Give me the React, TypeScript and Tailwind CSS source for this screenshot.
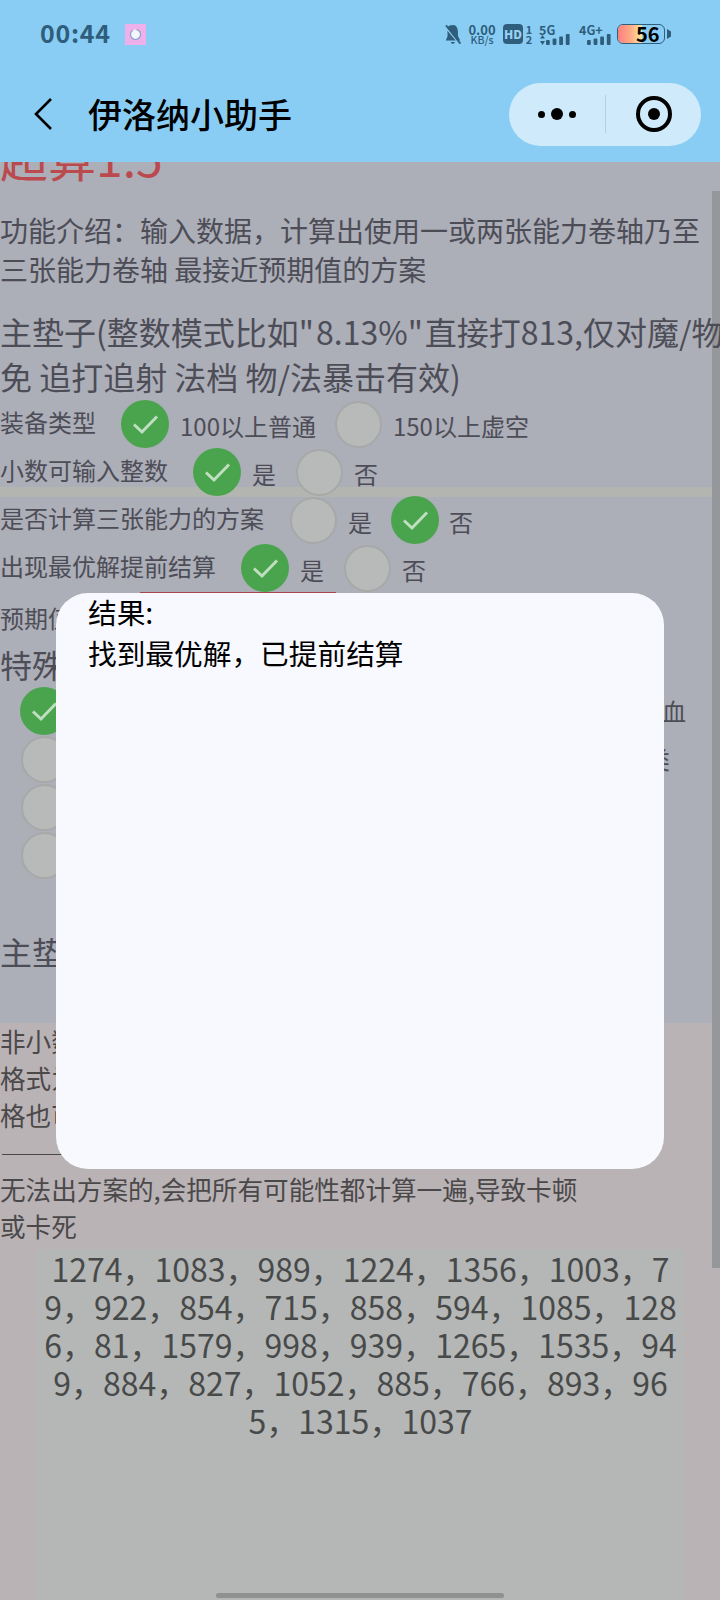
import React from "react";

const Check = () => (
  <span className="flex h-[48px] w-[48px] shrink-0 items-center justify-center rounded-full bg-[#4aa44e]">
    <svg width="27" height="22" viewBox="0 0 27 22" fill="none">
      <path d="M2 11.5 L10 19 L25 3.5" stroke="#bfdfc0" strokeWidth="3" strokeLinejoin="miter" />
    </svg>
  </span>
);

const Empty = () => (
  <span className="flex h-[48px] w-[48px] shrink-0 items-center justify-center">
    <span className="block h-[47px] w-[47px] rounded-full border-2 border-[#a7a8a8] bg-[#b8b9b9]" />
  </span>
);

const Bars = () => (
  <svg width="24" height="11" viewBox="0 0 24 11" fill="#2f5d7c">
    <rect x="0" y="6" width="3.8" height="5" rx="1" />
    <rect x="6.6" y="4.5" width="3.8" height="6.5" rx="1" />
    <rect x="13.2" y="2.5" width="3.8" height="8.5" rx="1" />
    <rect x="19.8" y="0" width="3.8" height="11" rx="1" />
  </svg>
);

function StatusBar() {
  return (
    <div className="flex h-[68px] items-center pl-[40px] text-[#2f5d7c]">
      <span className="mb-[3px] w-[85px] text-[25px] font-bold leading-none tracking-[0.7px]">00:44</span>
      <span className="flex h-[21px] w-[21px] items-center justify-center bg-[#eeb0ea]">
        <svg width="13" height="13" viewBox="0 0 13 13" fill="none">
          <circle cx="6.5" cy="6.5" r="5" fill="#f3f6fb" stroke="#8aa2c8" strokeWidth="1.2" strokeDasharray="20 4" />
        </svg>
      </span>
      <div className="ml-[298px] flex items-center">
        <svg width="18" height="21" viewBox="0 0 20 21" fill="#2f5d7c" preserveAspectRatio="none">
          <path d="M10 1 C14 1 15.5 4.5 15.5 8 L15.5 12 L18 16.5 L15 16.5 L4 3 C5 1.8 7.5 1 10 1 Z" />
          <path d="M3.8 6.8 L13 16.5 L2 16.5 L4 12 Z" />
          <path d="M7.5 18 L12 18 C11.6 20.4 8 20.4 7.5 18 Z" />
          <path d="M1.5 2 L3 .8 L19 19 L17.5 20.2 Z" />
        </svg>
        <div className="ml-[7px] flex w-[26px] flex-col items-center leading-none">
          <span className="text-[13px] font-semibold leading-[11px]">0.00</span>
          <span className="text-[10.5px] font-medium leading-[10px]">KB/s</span>
        </div>
        <span className="ml-[8px] flex h-[20px] w-[20px] items-center justify-center rounded-[4px] bg-[#2f5d7c] text-[12px] font-black leading-none text-[#9ad2f2]">HD</span>
        <div className="ml-[2px] flex w-[8px] flex-col items-center text-[11px] font-semibold leading-[10px]">
          <span>1</span>
          <span>2</span>
        </div>
        <div className="relative ml-[6px] h-[21px] w-[31px]">
          <span className="absolute left-0 top-0 text-[12.5px] font-bold leading-[11px]">5G</span>
          <svg className="absolute bottom-0 left-[1px]" width="5" height="10" viewBox="0 0 5 10" fill="#2f5d7c">
            <path d="M2.5 0 L5 3.5 L0 3.5 Z" />
            <path d="M0 6 L5 6 L2.5 10 Z" />
          </svg>
          <span className="absolute bottom-0 right-0 flex"><Bars /></span>
        </div>
        <div className="relative ml-[9px] h-[21px] w-[32px]">
          <span className="absolute left-0 top-0 whitespace-nowrap text-[12.5px] font-bold leading-[11px]">4G+</span>
          <span className="absolute bottom-0 right-0 flex"><Bars /></span>
        </div>
        <div className="relative ml-[6px] flex h-[20px] w-[48px] items-center rounded-[6px] border border-[#2f5d7c]">
          <span className="block h-full w-[24px] rounded-l-[5px] bg-gradient-to-r from-[#fb7f7f] via-[#fda885] to-[#f8e89a]" />
          <span className="absolute left-[18px] text-[20px] font-bold leading-none text-black">56</span>
        </div>
        <svg className="ml-[2px]" width="5" height="10" viewBox="0 0 5 10" fill="#2f5d7c">
          <path d="M0 0 L4 2.5 L4 7.5 L0 10 Z" />
        </svg>
      </div>
    </div>
  );
}

function NavBar() {
  return (
    <div className="flex h-[94px] items-center">
      <svg className="mb-[2px] ml-[33px]" width="20" height="34" viewBox="0 0 20 34" fill="none">
        <path d="M18 2 L3 17 L18 32" stroke="#000" strokeWidth="2.6" />
      </svg>
      <span className="mb-[3px] ml-[35px] text-[34px] font-medium leading-none text-black">伊洛纳小助手</span>
      <div className="mb-[2px] ml-[217px] flex h-[63px] w-[192px] items-center rounded-full bg-[#cfeafb]">
        <div className="flex w-[96px] items-center justify-center gap-[6px]">
          <span className="h-[7px] w-[7px] rounded-full bg-black" />
          <span className="h-[12px] w-[12px] rounded-full bg-black" />
          <span className="h-[7px] w-[7px] rounded-full bg-black" />
        </div>
        <span className="h-[38px] w-px bg-[#b4cfe0]" />
        <div className="flex flex-1 items-center justify-center">
          <span className="flex h-[36px] w-[36px] items-center justify-center rounded-full border-[4px] border-black">
            <span className="h-[12px] w-[12px] rounded-full bg-black" />
          </span>
        </div>
      </div>
    </div>
  );
}

function Choice({ label, on, a, b, a2 = 19, b1 = 11 }: { label: string; on: 0 | 1; a: string; b: string; a2?: number; b1?: number }) {
  return (
    <div className="relative z-10 flex h-[48px] items-center text-[24px] leading-none">
      <span className="mb-[4px] mr-[25px] whitespace-nowrap">{label}</span>
      {on === 0 ? <Check /> : <Empty />}
      <span className="ml-[11px] mt-[4px] whitespace-nowrap" style={{ marginRight: a2 }}>{a}</span>
      {on === 1 ? <Check /> : <Empty />}
      <span className="mt-[4px] whitespace-nowrap" style={{ marginLeft: b1 }}>{b}</span>
    </div>
  );
}

export default function App() {
  return (
    <div className="relative flex h-[1600px] w-[720px] flex-col overflow-hidden bg-[#89cdf4] font-['Noto_Sans_CJK_SC','Noto_Sans',sans-serif]">
      <StatusBar />
      <NavBar />
      <main className="flex-1 overflow-hidden bg-[#b9b3b5]">
        <section className="relative flow-root h-[861px] bg-[#acaeb8] text-[#4c4d56]">
          <div className="mt-[-36px] h-[60px] whitespace-nowrap text-[48px] leading-[60px] text-[#ba4a4d]">超算1.5</div>
          <p className="mt-[25px] w-[704px] text-[28px] leading-[39px]">
            功能介绍：输入数据，计算出使用一或两张能力卷轴乃至三张能力卷轴 最接近预期值的方案
          </p>
          <p className="relative z-10 mt-[20px] w-[726px] text-[32px] leading-[45px]">
            {"主垫子(整数模式比如\"\u200A8.13%\"\u200A直接打813,仅对魔/物免 追打追射 法档 物/法暴击有效)"}
          </p>
          <div className="relative mt-[1px]">
            <div className="absolute left-0 right-0 top-[87px] h-[10px] bg-[#b3b5b0]" />
            <Choice label="装备类型" on={0} a="100以上普通" b="150以上虚空" b1={10} />
            <Choice label="小数可输入整数" on={0} a="是" b="否" />
            <Choice label="是否计算三张能力的方案" on={1} a="是" b="否" b1={10} />
            <Choice label="出现最优解提前结算" on={0} a="是" b="否" />
          </div>
          <div className="flex h-[52px] items-center text-[24px] leading-none">
            <span className="w-[140px] self-end pb-[14px]">预期值</span>
            <span className="h-full w-[196px] border-t border-[#a8474a]" />
          </div>
          <div className="h-[43px] text-[32px] leading-[41px]">特殊</div>
          <div className="flex h-[48px] w-[686px] items-center justify-between pl-[20px] text-[24px] leading-none">
            <Check />
            <span>血</span>
          </div>
          <div className="flex h-[48px] w-[670px] items-center justify-between pl-[20px] text-[24px] leading-none">
            <Empty />
            <span>类</span>
          </div>
          <div className="flex h-[48px] items-center pl-[20px]"><Empty /></div>
          <div className="flex h-[48px] items-center pl-[20px]"><Empty /></div>
          <div className="mt-[50px] text-[32px] leading-[45px]">主垫</div>
        </section>
        <section className="flow-root text-[25.6px] leading-[37px] text-[#4b484a]">
          <p className="mt-[-1px]">非小数</p>
          <p>格式为</p>
          <p>格也可</p>
          <div className="ml-[2px] mt-[21px] h-px w-[140px] bg-[#4b484a]" />
          <p className="mt-[15px] w-[600px]">无法出方案的,会把所有可能性都计算一遍,导致卡顿或卡死</p>
          <div className="ml-[35px] mt-[5px] h-[400px] w-[651px] border-x-[3px] border-[#b7b5b5] bg-[#b5b7b6] px-[6px] text-center text-[32px] leading-[38px] text-[#484a4a] [word-break:break-all]">
            1274，1083，989，1224，1356，1003，79，922，854，715，858，594，1085，1286，81，1579，998，939，1265，1535，949，884，827，1052，885，766，893，965，1315，1037
          </div>
        </section>
      </main>

      <div className="absolute left-[712px] top-[191px] h-[1077px] w-[8px] bg-[#96979b]" />
      <div className="absolute left-[216px] top-[1593px] h-[5px] w-[288px] rounded-full bg-[#8f9090]" />

      <div className="absolute left-[56px] top-[593px] h-[576px] w-[608px] overflow-hidden rounded-[32px] bg-[#f8f9ff] pl-[32px] text-[28.7px] leading-[41px] text-black">
        <p className="mt-[-2px]">结果:</p>
        <p>找到最优解，已提前结算</p>
      </div>
    </div>
  );
}
